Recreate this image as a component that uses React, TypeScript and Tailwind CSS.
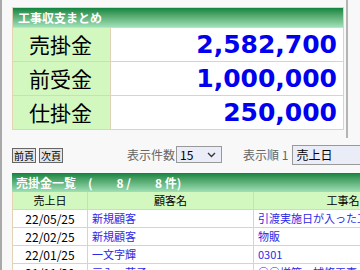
import React from "react";

const summary = [
  { label: "売掛金", value: "2,582,700" },
  { label: "前受金", value: "1,000,000" },
  { label: "仕掛金", value: "250,000" },
];

const list = [
  { date: "22/05/25", customer: "新規顧客", project: "引渡実施日が入った工事" },
  { date: "22/02/25", customer: "新規顧客", project: "物販" },
  { date: "22/01/25", customer: "一文字輝", project: "0301" },
  { date: "21/11/30", customer: "三入　花子", project: "○○増築・補修工事" },
];

const jp = { fontFamily: '"Noto Sans CJK JP", "DejaVu Sans", sans-serif' };

export default function App() {
  return (
    <div
      className="h-[270px] w-[360px] overflow-hidden border-l-2 border-[#a9a9a9] bg-[#f8f8f8] text-black"
      style={jp}
    >
      <div className="h-[138px] w-[346px] border-r-2 border-[#b4b4b4] pl-[10px] pt-[7px]">
        <div className="w-[332px] border border-[#e2d2b6] bg-white">
          <div className="flex h-[19px] items-center bg-gradient-to-b from-[#0a8440] to-[#9fe0b6] pl-[5px] text-[12px] font-bold leading-none text-white">
            工事収支まとめ
          </div>
          {summary.map((r) => (
            <div key={r.label} className="flex h-[34px] border-t border-[#e2d2b6]">
              <div className="w-[98px] shrink-0 whitespace-nowrap border-r border-[#e2d2b6] bg-[#d3f8bf] pl-[16px] text-left text-[21px] leading-[33px]">
                {r.label}
              </div>
              <div
                className="flex flex-1 items-center justify-end whitespace-nowrap pr-[6px] text-[25px] font-bold leading-none text-[#0000ee]"
                style={{ fontFamily: '"DejaVu Sans", sans-serif' }}
              >
                {r.value}
              </div>
            </div>
          ))}
        </div>
      </div>

      <div className="flex h-[35px] items-start whitespace-nowrap pl-[10px] pt-[10px]">
        <button className="h-[15px] shrink-0 border border-[#666] bg-[#e4e4e4] px-px text-[10px] leading-none">
          前頁
        </button>
        <button className="ml-[3px] h-[15px] shrink-0 border border-[#666] bg-[#e4e4e4] px-px text-[10px] leading-none">
          次頁
        </button>
        <span className="ml-[64px] mt-[-2px] shrink-0 text-[12px] leading-[18px] text-[#666]">表示件数</span>
        <div className="ml-[1px] mt-[-2px] flex h-[17px] w-[46px] shrink-0 items-center justify-between border border-[#999] bg-[#eaecf8] pl-[3px] pr-[5px] text-[12px] leading-none">
          <span>15</span>
          <svg width="9" height="6" viewBox="0 0 9 6" fill="none" stroke="#333" strokeWidth="1.3">
            <path d="M1 1l3.5 3.5L8 1" />
          </svg>
        </div>
        <span className="ml-[21px] mt-[-2px] shrink-0 text-[12px] leading-[18px] text-[#666]">表示順 1</span>
        <div className="ml-[4px] mt-[-3px] flex h-[20px] w-[80px] shrink-0 items-center border border-[#999] bg-[#eaecf8] pl-[3px] text-[12px] leading-none">
          売上日
        </div>
      </div>

      <div className="ml-[10px] w-[420px]">
        <div className="flex h-[19px] items-center whitespace-pre bg-gradient-to-b from-[#0a8440] to-[#9fe0b6] pl-[4px] text-[12px] font-bold leading-none text-white">
          {"売掛金一覧　(　　8 /　　8 件)"}
        </div>
        <div className="grid grid-cols-[75px_166px_1fr] border-l border-[#e2d2b6]">
          <div className="flex h-[18px] items-center justify-center border-r border-b border-[#e2d2b6] bg-[#d3f8bf] text-[11px]">
            売上日
          </div>
          <div className="flex h-[18px] items-center justify-center border-r border-b border-[#e2d2b6] bg-[#d3f8bf] text-[11px]">
            顧客名
          </div>
          <div className="flex h-[18px] items-center justify-center border-b border-[#e2d2b6] bg-[#d3f8bf] text-[11px]">
            工事名
          </div>
          {list.map((r) => (
            <React.Fragment key={r.date}>
              <div className="flex h-[18px] items-center justify-center border-r border-b border-[#e2d2b6] bg-white text-[12px]">
                {r.date}
              </div>
              <div className="flex h-[18px] items-center border-r border-b border-[#e2d2b6] bg-white pl-[4px] text-[11px] text-[#2b2be6]">
                {r.customer}
              </div>
              <div className="flex h-[18px] items-center whitespace-nowrap border-b border-[#e2d2b6] bg-white pl-[4px] text-[11px] text-[#2b2be6]">
                {r.project}
              </div>
            </React.Fragment>
          ))}
        </div>
      </div>
    </div>
  );
}
